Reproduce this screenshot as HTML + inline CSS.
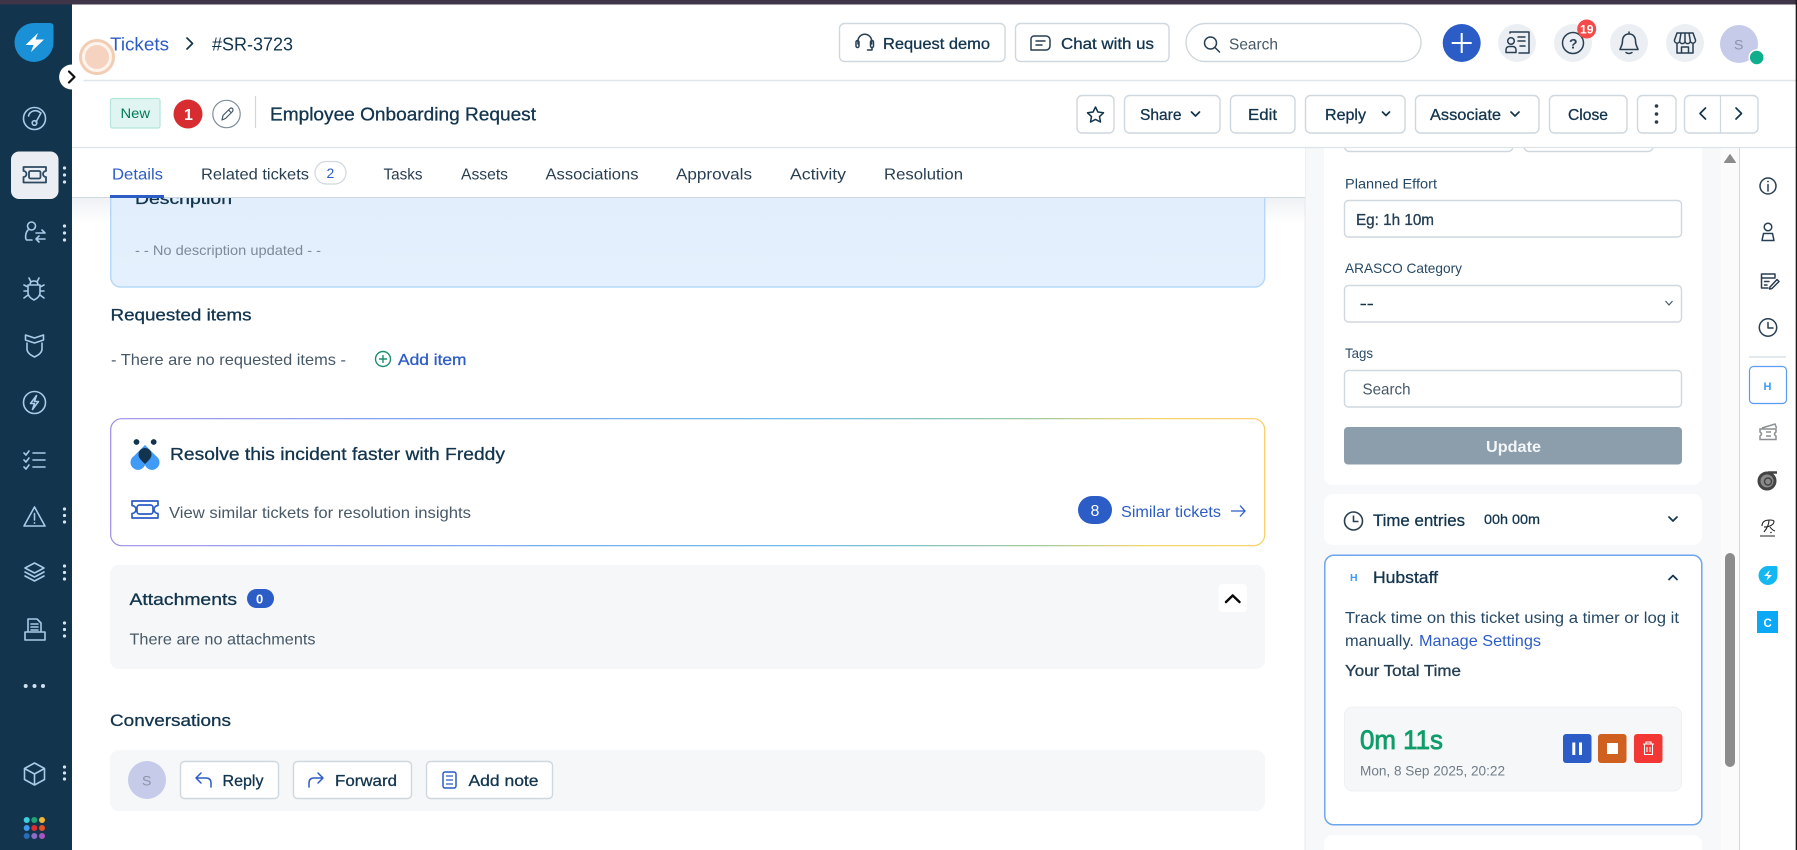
<!DOCTYPE html>
<html lang="en"><head><meta charset="utf-8"><title>Employee Onboarding Request</title>
<style>
html,body{margin:0;padding:0;background:#fff;width:1797px;height:850px;overflow:hidden}
svg{display:block;filter:blur(.3px)}
text{font-family:"Liberation Sans",sans-serif;fill:#12344d;font-size:16px}
.m{stroke:#12344d;stroke-width:.3}
.g{fill:#475867}
.l{fill:#2c5cc5}
.ic{fill:none;stroke:#a8cbe8;stroke-width:1.6;stroke-linecap:round;stroke-linejoin:round}
.dk{fill:none;stroke:#283f52;stroke-width:1.5;stroke-linecap:round;stroke-linejoin:round}
.ch{fill:none;stroke:#12344d;stroke-width:1.7;stroke-linecap:round;stroke-linejoin:round}
.b{fill:#fff;stroke:#cfd7df;stroke-width:1.4}
</style></head><body>
<svg xmlns="http://www.w3.org/2000/svg" width="1797" height="850" viewBox="0 0 1797 850">
<defs>
<linearGradient id="fb" gradientUnits="userSpaceOnUse" x1="110" y1="0" x2="1265" y2="0"><stop offset="0" stop-color="#a08ce8"/><stop offset=".25" stop-color="#6f97ef"/><stop offset=".6" stop-color="#5bb4e6"/><stop offset=".8" stop-color="#93c392"/><stop offset=".9" stop-color="#f3d05a"/><stop offset="1" stop-color="#f8cd62"/></linearGradient>
<linearGradient id="db" x1="0" y1="0" x2="0" y2="1"><stop offset="0" stop-color="#d9e6f5"/><stop offset=".3" stop-color="#e2eefb"/><stop offset="1" stop-color="#e4f0fd"/></linearGradient>
<linearGradient id="sh" x1="0" y1="0" x2="0" y2="1"><stop offset="0" stop-color="#eef1f4"/><stop offset="1" stop-color="#fff"/></linearGradient>
</defs>
<rect width="1797" height="850" fill="#fff"/>

<!-- main content -->
<rect x="72" y="197" width="1233" height="26" fill="url(#sh)"/>
<rect x="110.7" y="150" width="1154" height="137" rx="10" fill="url(#db)" stroke="#b5d7fb" stroke-width="1.4"/>
<text x="135" y="204" font-size="17" class="m" textLength="97" lengthAdjust="spacingAndGlyphs">Description</text>
<text x="135" y="255" style="font-size:14px;fill:#7d8b97" textLength="186" lengthAdjust="spacingAndGlyphs">- - No description updated - -</text>
<text x="110.5" y="320.5" style="font-size:17px" class="m" textLength="141" lengthAdjust="spacingAndGlyphs">Requested items</text>
<text x="111" y="365" class="g" textLength="235" lengthAdjust="spacingAndGlyphs">- There are no requested items -</text>
<circle cx="383" cy="359" r="7.5" fill="none" stroke="#1a9070" stroke-width="1.4"/><path d="M383 355v8M379 359h8" stroke="#1a9070" stroke-width="1.4" fill="none"/>
<text x="398" y="365" class="l" style="stroke:#2c5cc5;stroke-width:.3" textLength="68.5" lengthAdjust="spacingAndGlyphs">Add item</text>

<rect x="110.7" y="418.7" width="1154" height="127" rx="11" fill="#fff" stroke="url(#fb)" stroke-width="1.2"/>
<circle cx="136.5" cy="442" r="2.9" fill="#12344d"/><circle cx="153.7" cy="442" r="2.9" fill="#12344d"/>
<path d="M145 445 L156 456 A7.5 7.5 0 1 1 145 465 A7.5 7.5 0 1 1 134 456 Z" fill="#3f9bf5"/>
<path d="M145 464 C141 460 138.5 458 138.5 454.5 A6.5 6.5 0 0 1 151.5 454.5 C151.5 458 149 460 145 464 Z" fill="#12344d"/>
<text x="170" y="460" style="font-size:17.5px" class="m" textLength="335" lengthAdjust="spacingAndGlyphs">Resolve this incident faster with Freddy</text>
<path d="M132 501H158V505.5a4 4 0 0 0 0 8V518H132V513.5a4 4 0 0 0 0-8Z M139.5 505H150.5a2.5 2.5 0 0 1 2.5 2.5V511.5a2.5 2.5 0 0 1-2.5 2.5H139.5a2.5 2.5 0 0 1-2.5-2.5V507.5a2.5 2.5 0 0 1 2.5-2.5Z" fill="none" stroke="#2c5cc5" stroke-width="1.7" stroke-linejoin="round"/>
<text x="169" y="518" class="g" textLength="302" lengthAdjust="spacingAndGlyphs">View similar tickets for resolution insights</text>
<rect x="1078" y="496" width="34" height="28" rx="14" fill="#2c5cc5"/>
<text x="1090.5" y="516" style="font-size:16px;fill:#fff">8</text>
<text x="1121" y="517" class="l" textLength="100" lengthAdjust="spacingAndGlyphs">Similar tickets</text>
<path d="M1231 511H1245M1240 505.5L1245 511L1240 516.5" fill="none" stroke="#2c5cc5" stroke-width="1.3"/>

<rect x="110" y="565" width="1155" height="104" rx="9" fill="#f5f7f9"/>
<text x="129.5" y="605" style="font-size:17px" class="m" textLength="107.5" lengthAdjust="spacingAndGlyphs">Attachments</text>
<rect x="247" y="589" width="27" height="19" rx="9.5" fill="#2c5cc5"/>
<text x="256" y="603.5" style="font-size:13px;fill:#fff;font-weight:bold">0</text>
<text x="129.5" y="644.5" class="g" textLength="186" lengthAdjust="spacingAndGlyphs">There are no attachments</text>
<rect x="1218.5" y="584" width="28.5" height="28" rx="4" fill="#fff"/>
<path d="M1226 602L1232.7 595.5L1239.5 602" fill="none" stroke="#0a0a0a" stroke-width="2.5" stroke-linecap="round" stroke-linejoin="round"/>

<text x="110" y="726" style="font-size:17px" class="m" textLength="121" lengthAdjust="spacingAndGlyphs">Conversations</text>
<rect x="110" y="750" width="1155" height="61" rx="9" fill="#f5f7f9"/>
<circle cx="147" cy="780" r="19" fill="#c5cbe8"/>
<text x="142" y="785.5" style="font-size:14px;fill:#8d93a8">S</text>
<rect class="b" x="180.5" y="761.5" width="98" height="37" rx="4"/>
<path d="M201 773L196 778L201 783M196.5 778H206Q211 778 211 783V787" fill="none" stroke="#2c5cc5" stroke-width="1.5" stroke-linecap="round" stroke-linejoin="round"/>
<text x="222.5" y="786" class="m" textLength="41" lengthAdjust="spacingAndGlyphs">Reply</text>
<rect class="b" x="293.5" y="761.5" width="118" height="37" rx="4"/>
<path d="M318 773L323 778L318 783M322.5 778H314Q309 778 309 783V787" fill="none" stroke="#2c5cc5" stroke-width="1.5" stroke-linecap="round" stroke-linejoin="round"/>
<text x="335" y="786" class="m" textLength="62" lengthAdjust="spacingAndGlyphs">Forward</text>
<rect class="b" x="426.5" y="761.5" width="126" height="37" rx="4"/>
<rect x="443" y="772" width="13" height="16" rx="2" fill="none" stroke="#2c5cc5" stroke-width="1.5"/><path d="M446 776H453M446 780H453M446 784H453" stroke="#2c5cc5" stroke-width="1.3"/>
<text x="468.5" y="786" class="m" textLength="70" lengthAdjust="spacingAndGlyphs">Add note</text>

<!-- right panel -->
<rect x="1305" y="148" width="416" height="702" fill="#f6f8fa"/>
<path d="M1305 148V850" stroke="#e6eaee" stroke-width="1"/>
<rect x="1721" y="148" width="18" height="702" fill="#fbfbfc"/>
<path d="M1739.5 148V850" stroke="#cfd7df"/>
<rect x="1324" y="130" width="378" height="355" rx="9" fill="#fff"/>
<rect class="b" x="1344.5" y="130" width="168.5" height="21.5" rx="5"/>
<rect class="b" x="1524" y="130" width="129" height="21.5" rx="5"/>
<text x="1345" y="188.5" style="font-size:14px;fill:#264966" textLength="92" lengthAdjust="spacingAndGlyphs">Planned Effort</text>
<rect class="b" x="1344.5" y="200.5" width="337" height="36.5" rx="4"/>
<text x="1356" y="225" class="m" style="fill:#283f52" textLength="78" lengthAdjust="spacingAndGlyphs">Eg: 1h 10m</text>
<text x="1345" y="273" style="font-size:14px;fill:#264966" textLength="117" lengthAdjust="spacingAndGlyphs">ARASCO Category</text>
<rect class="b" x="1344.5" y="285.5" width="337" height="36.5" rx="4"/>
<path d="M1360.5 304.5H1366M1367.5 304.5H1373" stroke="#12344d" stroke-width="1.6"/>
<path d="M1665.5 301L1669 305L1672.5 301" fill="none" stroke="#475867" stroke-width="1.2"/>
<text x="1345" y="358" style="font-size:14px;fill:#264966" textLength="28" lengthAdjust="spacingAndGlyphs">Tags</text>
<rect class="b" x="1344.5" y="370.5" width="337" height="36.5" rx="4"/>
<text x="1362.5" y="394.5" class="g" textLength="48" lengthAdjust="spacingAndGlyphs">Search</text>
<rect x="1344" y="427" width="338" height="37.5" rx="4" fill="#8c9eac"/>
<text x="1486" y="452" style="font-size:16px;fill:#f3f6f8;font-weight:bold" textLength="55" lengthAdjust="spacingAndGlyphs">Update</text>

<rect x="1324" y="494" width="378" height="51" rx="9" fill="#fff"/>
<circle cx="1353.5" cy="521" r="9" fill="none" stroke="#283f52" stroke-width="1.6"/><path d="M1353.5 515.5V521.5H1358.5" fill="none" stroke="#283f52" stroke-width="1.6"/>
<text x="1373" y="526" style="font-size:16.5px" class="m" textLength="92" lengthAdjust="spacingAndGlyphs">Time entries</text>
<text x="1484" y="524" style="font-size:14px" class="m" textLength="56" lengthAdjust="spacingAndGlyphs">00h 00m</text>
<path d="M1669 517L1673 521L1677 517" class="ch"/>

<rect x="1324.8" y="555.3" width="377" height="269.5" rx="9" fill="#fff" stroke="#6ea5ee" stroke-width="1.5"/>
<text x="1350" y="581" style="font-size:10.5px;fill:#3b9cf5;font-weight:bold">H</text>
<text x="1373" y="583" style="font-size:16.5px" class="m" textLength="65" lengthAdjust="spacingAndGlyphs">Hubstaff</text>
<path d="M1669 579.5L1673 575.5L1677 579.5" class="ch"/>
<text x="1345" y="623" style="fill:#264966" textLength="334" lengthAdjust="spacingAndGlyphs">Track time on this ticket using a timer or log it</text>
<text x="1345" y="646" style="fill:#264966" textLength="69" lengthAdjust="spacingAndGlyphs">manually.</text>
<text x="1419" y="646" class="l" textLength="122" lengthAdjust="spacingAndGlyphs">Manage Settings</text>
<text x="1345" y="676" class="m" style="fill:#283f52" textLength="116" lengthAdjust="spacingAndGlyphs">Your Total Time</text>
<rect x="1344.5" y="707" width="337" height="84" rx="8" fill="#f5f7f9" stroke="#eef1f3"/>
<text x="1360" y="749" style="font-size:27px;fill:#0f9d6a;stroke:#0f9d6a;stroke-width:.8" textLength="83" lengthAdjust="spacingAndGlyphs">0m 11s</text>
<text x="1360" y="775.5" style="font-size:14px;fill:#6f7c87" textLength="145" lengthAdjust="spacingAndGlyphs">Mon, 8 Sep 2025, 20:22</text>
<rect x="1563" y="734" width="28.5" height="29" rx="3" fill="#2c5cc5"/><path d="M1573.8 742.5V755M1580.5 742.5V755" stroke="#fff" stroke-width="3"/>
<rect x="1598" y="734" width="28.5" height="29" rx="3" fill="#cf6020"/><rect x="1607" y="743" width="11" height="11" fill="#fff"/>
<rect x="1634" y="734" width="28.5" height="29" rx="3" fill="#f33735"/>
<path d="M1643 744H1654M1646 744V742H1651V744M1644.5 744V754.5H1652.5V744M1647 747V752M1650 747V752" fill="none" stroke="#fff" stroke-width="1.1"/>
<rect x="1324" y="835" width="378" height="30" rx="9" fill="#fff"/>
<path d="M1724.5 162.500L1730 154.500L1735.500 162.500Z" fill="#8c8c8c" stroke="#8c8c8c" stroke-linejoin="round"/>
<rect x="1725" y="553" width="10" height="214" rx="5" fill="#8c8c8c"/>

<!-- header areas -->
<rect x="72" y="4" width="1725" height="144" fill="#fff"/>
<rect x="72" y="148" width="1233" height="49" fill="#fff"/>
<path d="M72 80.5H1797" stroke="#dfe5ea" stroke-width="1.5"/>
<path d="M72 147.5H1797" stroke="#dde3e9" stroke-width="1.2"/>
<path d="M72 197.5H1305" stroke="#cfd7df" stroke-width="1"/>

<rect width="1797" height="4.5" fill="#3f3548"/>
<rect x="1795.7" y="0" width="1.3" height="850" fill="#1a1a1a"/>

<!-- top bar -->
<circle cx="97" cy="57" r="16.5" fill="#fdf4ee" stroke="#f1cdb4" stroke-width="3"/>
<circle cx="97" cy="57" r="12" fill="#f5d3c0"/>
<text x="110" y="50.5" style="font-size:18.5px;fill:#2c5cc5" textLength="59" lengthAdjust="spacingAndGlyphs">Tickets</text>
<path d="M187 38L192.5 43.5L187 49" class="ch" stroke-width="2"/>
<text x="212" y="50.5" style="font-size:18px" textLength="81" lengthAdjust="spacingAndGlyphs">#SR-3723</text>

<rect class="b" x="839.5" y="23.5" width="165.5" height="38" rx="5"/>
<path d="M858 44V41a6.8 6.8 0 0 1 13.600 0V44" class="dk" stroke-width="1.1"/><rect x="856" y="40.500" width="3" height="7" rx="1.500" class="dk" stroke-width="1.100"/><rect x="870.500" y="40.500" width="3" height="7" rx="1.500" class="dk" stroke-width="1.100"/><path d="M872 47.500V50H867.500" class="dk" stroke-width="1.100"/>
<text x="883" y="49" class="m" textLength="107" lengthAdjust="spacingAndGlyphs">Request demo</text>
<rect class="b" x="1015.5" y="23.5" width="153.5" height="38" rx="5"/>
<path d="M1034 36H1046A4 4 0 0 1 1050 40V46A4 4 0 0 1 1046 50H1031V39A3 3 0 0 1 1034 36ZM1036 41H1045M1036 45H1042" class="dk" stroke-width="1.3"/>
<text x="1061" y="49" class="m" textLength="93" lengthAdjust="spacingAndGlyphs">Chat with us</text>
<rect class="b" x="1186" y="23.5" width="235" height="38" rx="19"/>
<circle cx="1210.5" cy="43" r="6" class="dk" stroke-width="1.3"/><path d="M1215 47.500L1219.500 52" class="dk" stroke-width="1.300"/>
<text x="1229" y="49.5" class="g" textLength="49" lengthAdjust="spacingAndGlyphs">Search</text>

<circle cx="1461.7" cy="43" r="19" fill="#2c5cc5"/><path d="M1461.7 33V53M1451.7 43H1471.7" stroke="#fff" stroke-width="2"/>
<circle cx="1517" cy="43" r="19" fill="#ebeff3"/>
<circle cx="1511" cy="41" r="3.300" class="dk"/><path d="M1506 52.500V50Q1506 46.500 1509.500 46.500H1512.500Q1516 46.500 1516 50V52.500Z" class="dk"/><path d="M1510 33V32H1529V53H1519M1518 37H1525M1518 41H1525M1520 46H1525" class="dk"/>
<circle cx="1573" cy="43" r="19" fill="#ebeff3"/>
<circle cx="1573" cy="43" r="10.5" class="dk"/>
<text x="1569" y="48.5" style="font-size:14px;font-weight:bold;fill:#283f52">?</text>
<circle cx="1629" cy="43" r="19" fill="#ebeff3"/>
<path d="M1629 32V34M1629 34C1624 34 1622.5 38 1622.5 41C1622.5 46 1620 48 1620 49.5H1638C1638 48 1635.5 46 1635.5 41C1635.5 38 1634 34 1629 34ZM1626 52.5Q1629 54.5 1632 52.5" class="dk"/>
<circle cx="1685" cy="43" r="19" fill="#ebeff3"/>
<path d="M1677 33H1693L1695.500 40A2.600 2.600 0 0 1 1690.300 41A2.600 2.600 0 0 1 1685 41A2.600 2.600 0 0 1 1679.700 41A2.600 2.600 0 0 1 1674.500 40ZM1677 44V53H1693V44M1681.500 53V47H1688.500V53M1681 33L1679.700 41M1689 33L1690.300 41M1685 33V41" class="dk"/>
<circle cx="1739" cy="44" r="19" fill="#c5cbe8"/>
<text x="1734" y="49.5" style="font-size:14px;fill:#8d93a8">S</text>
<circle cx="1756.7" cy="57.5" r="7.5" fill="#0fae8c" stroke="#fff" stroke-width="1.5"/>
<circle cx="1586.7" cy="29" r="9.5" fill="#f44a4a"/>
<text x="1580" y="33.5" style="font-size:12px;fill:#fff;font-weight:bold" textLength="13.5" lengthAdjust="spacingAndGlyphs">19</text>

<!-- ticket subheader -->
<rect x="110.5" y="98.5" width="49.5" height="29.5" rx="2" fill="#e0f5f1" stroke="#b4e5da" stroke-width="1.2"/>
<text x="120.5" y="118" style="font-size:14px;fill:#00795b" textLength="29.5" lengthAdjust="spacingAndGlyphs">New</text>
<circle cx="188" cy="114" r="14.5" fill="#d72d30"/>
<text x="184" y="120" style="font-size:16px;fill:#fff;font-weight:bold">1</text>
<circle cx="226.5" cy="114" r="13.7" fill="#fff" stroke="#7f8e9b" stroke-width="1.2"/>
<path d="M222 120L223 115.5L230 108.5Q231.5 107.5 232.5 108.5T232.5 111.5L225.500 118.500ZM228.500 110L231 112.500" fill="none" stroke="#475867" stroke-width="1.2" stroke-linejoin="round"/>
<path d="M255.5 96V128" stroke="#cfd7df" stroke-width="1.2"/>
<text x="270" y="120.5" style="font-size:18px" class="m" textLength="266" lengthAdjust="spacingAndGlyphs">Employee Onboarding Request</text>

<rect class="b" x="1077" y="95.5" width="37" height="37.5" rx="5"/>
<path d="M1095.5 107L1097.900 112L1103.500 112.800L1099.500 116.600L1100.500 122L1095.500 119.400L1090.500 122L1091.500 116.600L1087.500 112.800L1093.100 112Z" fill="none" stroke="#12344d" stroke-width="1.500" stroke-linejoin="round"/>
<rect class="b" x="1124.5" y="95.5" width="95.5" height="37.5" rx="5"/>
<text x="1140" y="120" class="m" textLength="41.5" lengthAdjust="spacingAndGlyphs">Share</text>
<path d="M1191.500 112L1195.500 116L1199.500 112" class="ch"/>
<rect class="b" x="1230.5" y="95.5" width="64.5" height="37.5" rx="5"/>
<text x="1248" y="120" class="m" textLength="29" lengthAdjust="spacingAndGlyphs">Edit</text>
<rect class="b" x="1305.5" y="95.5" width="99.5" height="37.5" rx="5"/>
<text x="1325" y="120" class="m" textLength="41" lengthAdjust="spacingAndGlyphs">Reply</text>
<path d="M1382.500 112L1386 115.500L1389.500 112" class="ch" stroke-width="1.300"/>
<rect class="b" x="1415.5" y="95.5" width="123.5" height="37.5" rx="5"/>
<text x="1430" y="120" class="m" textLength="71" lengthAdjust="spacingAndGlyphs">Associate</text>
<path d="M1511 112L1515 116L1519 112" class="ch"/>
<rect class="b" x="1549.5" y="95.5" width="77.5" height="37.5" rx="5"/>
<text x="1568" y="120" class="m" textLength="40" lengthAdjust="spacingAndGlyphs">Close</text>
<rect class="b" x="1637.5" y="95.5" width="38.5" height="37.5" rx="5"/>
<circle cx="1656.5" cy="106" r="1.8" fill="#283f52"/><circle cx="1656.5" cy="114" r="1.8" fill="#283f52"/><circle cx="1656.5" cy="122" r="1.8" fill="#283f52"/>
<rect class="b" x="1684.5" y="95.5" width="73.5" height="37.5" rx="5"/>
<path d="M1720.5 96V133" stroke="#cfd7df" stroke-width="1.2"/>
<path d="M1705.5 108L1700 113.5L1705.5 119" class="ch" stroke-width="2"/>
<path d="M1736 108L1741.5 113.5L1736 119" class="ch" stroke-width="2"/>

<!-- tabs -->
<text x="112" y="179.5" class="l" textLength="51" lengthAdjust="spacingAndGlyphs">Details</text>
<rect x="110" y="195" width="54" height="3" fill="#2c5cc5"/>
<text x="201" y="179.5" class="g" style="fill:#283f52" textLength="108" lengthAdjust="spacingAndGlyphs">Related tickets</text>
<rect x="315" y="161.5" width="31" height="22.5" rx="11.2" fill="#fff" stroke="#cfd7df" stroke-width="1.2"/>
<text x="326.5" y="178" style="font-size:14px;fill:#2c5cc5">2</text>
<text x="383.5" y="179.5" style="fill:#283f52" textLength="39" lengthAdjust="spacingAndGlyphs">Tasks</text>
<text x="461" y="179.5" style="fill:#283f52" textLength="47" lengthAdjust="spacingAndGlyphs">Assets</text>
<text x="545.5" y="179.5" style="fill:#283f52" textLength="93" lengthAdjust="spacingAndGlyphs">Associations</text>
<text x="676" y="179.5" style="fill:#283f52" textLength="76" lengthAdjust="spacingAndGlyphs">Approvals</text>
<text x="790" y="179.5" style="fill:#283f52" textLength="56" lengthAdjust="spacingAndGlyphs">Activity</text>
<text x="884" y="179.5" style="fill:#283f52" textLength="79" lengthAdjust="spacingAndGlyphs">Resolution</text>

<!-- sidebar -->
<rect x="0" y="4.5" width="72" height="845.5" fill="#12344d"/>
<path d="M34.5 23H50Q53.5 23 53.5 26.5V42.5A19.5 19.5 0 1 1 34.5 23Z" fill="#1a90d6"/>
<path d="M38 33L25.5 45H33.5L31 52L44 39.5H35.5Z" fill="#fff"/>

<circle cx="34.5" cy="118.5" r="11" class="ic"/>
<path d="M28.5 116A7 7 0 0 1 40 112.5M36 122L41 113" class="ic"/><circle cx="34.5" cy="123" r="2.3" class="ic"/>

<rect x="11" y="151.5" width="47.5" height="47.5" rx="8" fill="#ebeff3"/>
<path d="M23.500 167H46V171a3 3 0 0 0 0 6V182.500H23.500V177a3 3 0 0 0 0-6Z" fill="none" stroke="#2c4a62" stroke-width="1.800" stroke-linejoin="round"/>
<rect x="29" y="171" width="11.500" height="7.500" rx="1.500" fill="none" stroke="#2c4a62" stroke-width="1.800"/>

<circle cx="31.5" cy="226" r="4" class="ic"/>
<path d="M28 230C25 233 25 240 27 240H32M36 233H45M42 230L45 233M45 239H36M39 236L36 239L39 242" class="ic"/>
<path d="M28 285H40V293Q40 297 34 300Q28 297 28 293ZM30 285Q30 281 34 281Q38 281 38 285M29 278L31 282M39 278L37 282M28 287L24 285M28 291H24M28 295L24 298M40 287L44 285M40 291H44M40 295L44 298" class="ic"/>
<path d="M25.5 335L34.5 338L43.5 335V340L34.5 343L25.5 340ZM27 343V349Q27 353.5 34.5 357Q42 353.5 42 349V343" class="ic"/>
<circle cx="34.5" cy="402.5" r="11" class="ic"/>
<path d="M36.5 395.5L30.5 403.5H34.5L32.5 409.5L38.5 401.5H34.5Z" class="ic"/>
<path d="M24 453L26 455L29 451M24 460L26 462L29 458M24 467L26 469L29 465M33 453H45M33 460H45M33 467H45" class="ic"/>
<path d="M34.5 507L45 526H24Z" class="ic" stroke-width="1.8"/>
<path d="M34.5 513.5V520" class="ic"/><circle cx="34.5" cy="523" r=".9" fill="#a8cbe8"/>
<path d="M34.5 563L44 568L34.5 573L25 568ZM25 572L34.5 577L44 572M25 576L34.5 581L44 576" class="ic"/>
<path d="M28 632V619H37L41 623V632M31 624H38M31 627H38M31 630H38M25 632H45V640H25Z" class="ic"/>
<circle cx="25.7" cy="686" r="2" fill="#cfe0ee"/><circle cx="34.5" cy="686" r="2" fill="#cfe0ee"/><circle cx="43" cy="686" r="2" fill="#cfe0ee"/>
<path d="M34.5 763L44.5 768.5V779.5L34.5 785L24.5 779.5V768.5ZM24.5 768.5L34.5 774L44.5 768.5M34.5 774V785" class="ic"/>
<g fill="#d7e4ef">
<circle cx="64.5" cy="168" r="1.6"/><circle cx="64.5" cy="175" r="1.6"/><circle cx="64.5" cy="182" r="1.6"/>
<circle cx="64.5" cy="226" r="1.6"/><circle cx="64.5" cy="233" r="1.6"/><circle cx="64.5" cy="240" r="1.6"/>
<circle cx="64.5" cy="509" r="1.6"/><circle cx="64.5" cy="515.5" r="1.6"/><circle cx="64.5" cy="522" r="1.6"/>
<circle cx="64.5" cy="566" r="1.6"/><circle cx="64.5" cy="572.5" r="1.6"/><circle cx="64.5" cy="579" r="1.6"/>
<circle cx="64.5" cy="623" r="1.6"/><circle cx="64.5" cy="629.5" r="1.6"/><circle cx="64.5" cy="636" r="1.6"/>
<circle cx="64.5" cy="767" r="1.6"/><circle cx="64.5" cy="773" r="1.6"/><circle cx="64.5" cy="779" r="1.6"/>
</g>
<circle cx="26.7" cy="820" r="3" fill="#3fd0e0"/><circle cx="34.3" cy="820" r="3" fill="#1fa672"/><circle cx="42" cy="820" r="3" fill="#f5b731"/>
<circle cx="26.7" cy="828" r="3" fill="#3f9bef"/><circle cx="34.3" cy="828" r="3" fill="#e02d2d"/><circle cx="42" cy="828" r="3" fill="#e9511f"/>
<circle cx="26.7" cy="836" r="3" fill="#2a6cb8"/><circle cx="34.3" cy="836" r="3" fill="#8c6cc4"/><circle cx="42" cy="836" r="3" fill="#a855c0"/>

<circle cx="71.6" cy="77" r="12.5" fill="#fff"/>
<path d="M69 71.5L74.5 77L69 82.5" fill="none" stroke="#111" stroke-width="2.2" stroke-linecap="round" stroke-linejoin="round"/>

<!-- right rail -->
<circle cx="1768" cy="186" r="8" class="dk" stroke-width="1.4"/><path d="M1768 184.5V191" class="dk"/><circle cx="1768" cy="181.5" r=".9" fill="#283f52"/>
<circle cx="1768" cy="227" r="3.8" class="dk"/><path d="M1762 240.5H1774L1772.5 233.5H1763.5Z" class="dk"/>
<path d="M1775 277V274H1761.5V288H1768M1761.5 278H1775M1764.5 281.5H1769M1764.5 285H1767M1770 287L1777 279.5L1779 281.5L1772 288.5L1769.5 289Z" class="dk" stroke-width="1.3"/>
<circle cx="1768" cy="327.5" r="8.7" class="dk"/><path d="M1768 322.5V328H1773" class="dk"/>
<path d="M1749 357H1786" stroke="#c9d3dd" stroke-width="1"/>
<rect x="1749.5" y="366.5" width="37" height="37" rx="4" fill="#fff" stroke="#5c9cf0" stroke-width="1.2"/>
<text x="1763.5" y="390" style="font-size:11px;font-weight:bold;fill:#3b9cf5">H</text>
<path d="M1760 429H1776V432Q1773 434 1776 436V439.5H1760V436Q1763 434 1760 432ZM1762 428L1775 424L1776.5 428M1766 432H1771M1766 436H1771" fill="none" stroke="#8a8f94" stroke-width="1.5"/>
<circle cx="1767" cy="481" r="8" fill="#8a8a8a" stroke="#444" stroke-width="3"/>
<path d="M1768 472.500H1777" stroke="#444" stroke-width="2.500"/><circle cx="1768" cy="481.500" r="3.500" fill="none" stroke="#444" stroke-width="1.500"/>
<path d="M1762 526Q1762 520 1770 520Q1776 520 1773 524Q1770 527 1764 527M1769 520Q1769 526 1764 532M1770 527Q1772 530 1775 531M1760 536H1775" fill="none" stroke="#222" stroke-width="1.100"/>
<circle cx="1771" cy="532.500" r=".8" fill="#222"/>
<path d="M1768 566H1776Q1777.5 566 1777.5 567.5V575A9.5 9.5 0 1 1 1768 566Z" fill="#14b8f0"/>
<path d="M1770 570L1764 576H1768L1766.5 580.5L1772 575H1768Z" fill="#fff"/>
<rect x="1757" y="611" width="21" height="22" fill="#0aa8f5"/>
<text x="1763.5" y="627" style="font-size:11.5px;fill:#fff;font-weight:bold">C</text>
</svg>
</body></html>
